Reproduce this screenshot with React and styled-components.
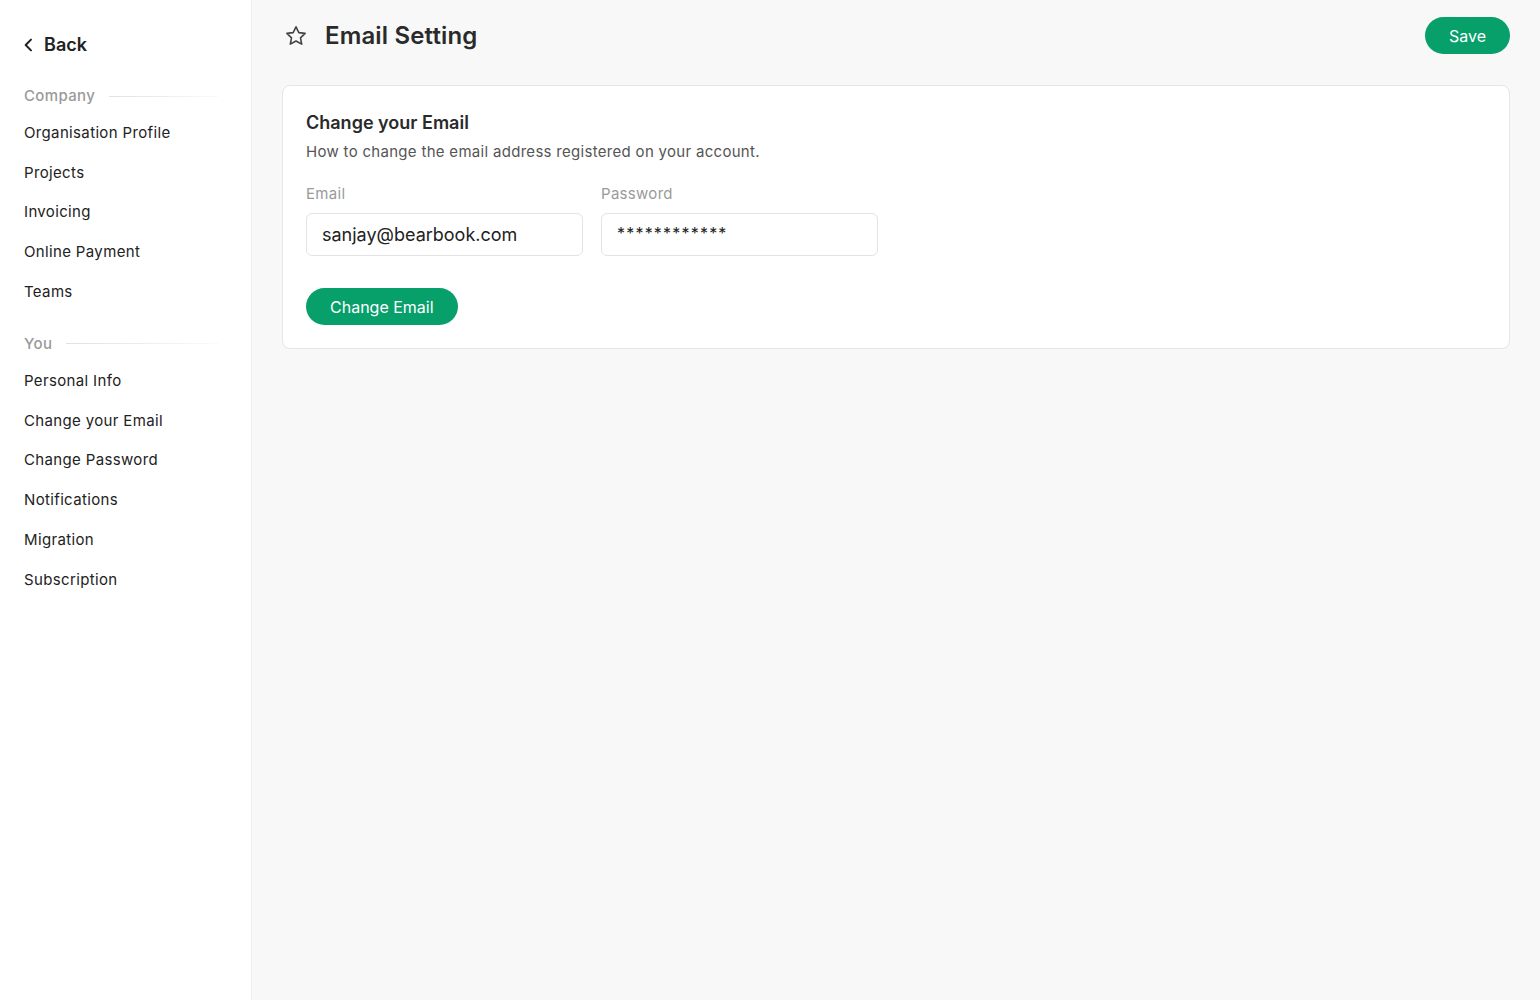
import styled, { createGlobalStyle } from 'styled-components';

const GlobalStyle = createGlobalStyle`
  body {
    margin: 0;
    font-family: Inter, "Noto Sans", sans-serif;
    color: #222;
    background: #f8f8f8;
  }
`;

const companyLinks = ['Organisation Profile', 'Projects', 'Invoicing', 'Online Payment', 'Teams'];
const youLinks = [
  'Personal Info',
  'Change your Email',
  'Change Password',
  'Notifications',
  'Migration',
  'Subscription',
];

export default function App() {
  return (
    <Page>
      <GlobalStyle />
      <Sidebar>
        <BackLink>
          <svg width="16" height="16" viewBox="0 0 24 24" fill="none" stroke="#222" strokeWidth="3" strokeLinecap="round" strokeLinejoin="round">
            <path d="M15 4l-8 8 8 8" />
          </svg>
          Back
        </BackLink>

        <Section>
          <SectionTitle>
            Company <Rule />
          </SectionTitle>
          {companyLinks.map(link => (
            <NavItem key={link}>{link}</NavItem>
          ))}
        </Section>

        <Section>
          <SectionTitle>
            You <Rule />
          </SectionTitle>
          {youLinks.map(link => (
            <NavItem key={link}>{link}</NavItem>
          ))}
        </Section>
      </Sidebar>

      <Main>
        <Header>
          <TitleGroup>
            <svg width="24" height="24" viewBox="0 0 24 24" fill="none" stroke="#444" strokeWidth="1.6" strokeLinejoin="round">
              <path d="M12 2.8l2.8 5.8 6.3.8-4.6 4.4 1.2 6.3L12 17l-5.7 3.1 1.2-6.3-4.6-4.4 6.3-.8z" />
            </svg>
            <PageTitle>Email Setting</PageTitle>
          </TitleGroup>
          <PillButton>Save</PillButton>
        </Header>

        <Card>
          <CardTitle>Change your Email</CardTitle>
          <CardText>How to change the email address registered on your account.</CardText>

          <FieldRow>
            <Field>
              <Label>Email</Label>
              <Input>sanjay@bearbook.com</Input>
            </Field>
            <Field>
              <Label>Password</Label>
              <Input $secret>************</Input>
            </Field>
          </FieldRow>

          <PillButton>Change Email</PillButton>
        </Card>
      </Main>
    </Page>
  );
}

const Page = styled.div`
  display: flex;
  min-height: 1000px;
`;

const Sidebar = styled.aside`
  width: 252px;
  flex-shrink: 0;
  background: #fff;
  border-right: 1px solid #efefef;
  padding: 33px 0 0 24px;
  box-sizing: border-box;
`;

const BackLink = styled.div`
  display: flex;
  align-items: center;
  gap: 7px;
  margin-left: -3px;
  font-size: 18px;
  font-weight: 600;
  letter-spacing: 0.05px;
  color: #222;
  line-height: 24px;
  margin-bottom: 28px;
`;

const Section = styled.div`
  display: flex;
  flex-direction: column;
  margin-bottom: 21px;
`;

const SectionTitle = styled.div`
  display: flex;
  align-items: center;
  gap: 14px;
  font-size: 15px;
  font-weight: 500;
  letter-spacing: 0.35px;
  color: #9a9a9a;
  line-height: 22px;
  margin-bottom: 6px;
  padding-right: 32px;
`;

const Rule = styled.span`
  flex: 1;
  height: 1px;
  background: linear-gradient(to right, #dde2e2, rgba(221, 226, 226, 0.15));
`;

const NavItem = styled.div`
  font-size: 15px;
  letter-spacing: 0.35px;
  color: #222;
  line-height: 22px;
  padding: 8.9px 0;
`;

const Main = styled.main`
  flex: 1;
  padding: 17px 30px 0 30px;
`;

const Header = styled.div`
  display: flex;
  align-items: center;
  justify-content: space-between;
  margin-bottom: 31px;
`;

const TitleGroup = styled.div`
  display: flex;
  align-items: center;
  gap: 17px;
  padding-left: 2px;
`;

const PageTitle = styled.h1`
  margin: 0;
  font-size: 24px;
  font-weight: 600;
  letter-spacing: 0.15px;
  color: #2a2a2a;
  line-height: 36px;
`;

const PillButton = styled.button`
  border: none;
  border-radius: 999px;
  background: #07a06b;
  color: #fff;
  font-family: inherit;
  font-size: 16px;
  height: 37px;
  padding: 0 24px;
  cursor: pointer;
`;

const Card = styled.section`
  background: #fff;
  border: 1px solid #e6e6e6;
  border-radius: 8px;
  padding: 24px 23px 23px;
  display: flex;
  flex-direction: column;
  align-items: flex-start;
`;

const CardTitle = styled.h2`
  margin: 0;
  font-size: 18px;
  font-weight: 600;
  color: #2a2a2a;
  line-height: 26px;
`;

const CardText = styled.p`
  margin: 5px 0 21px;
  font-size: 15px;
  letter-spacing: 0.3px;
  color: #555;
  line-height: 22px;
`;

const FieldRow = styled.div`
  display: flex;
  gap: 18px;
  margin-bottom: 32px;
`;

const Field = styled.div`
  display: flex;
  flex-direction: column;
  gap: 9px;
`;

const Label = styled.label`
  font-size: 15px;
  letter-spacing: 0.3px;
  color: #9a9a9a;
  line-height: 20px;
`;

const Input = styled.div`
  width: 277px;
  height: 43px;
  box-sizing: border-box;
  border: 1px solid #e3e3e3;
  border-radius: 6px;
  padding: 0 15px;
  display: flex;
  align-items: center;
  font-size: ${p => (p.$secret ? '16px' : '18px')};
  letter-spacing: ${p => (p.$secret ? '1.2px' : '0')};
  color: #222;
  padding-bottom: ${p => (p.$secret ? '4px' : '0')};
`;
